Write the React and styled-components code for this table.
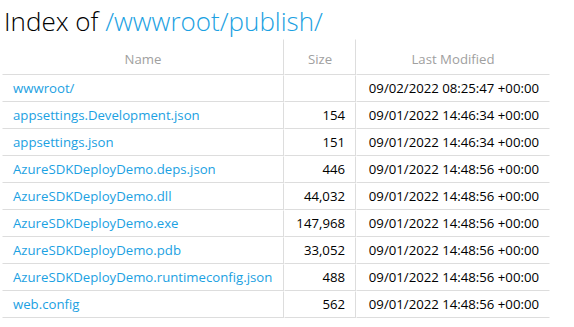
import React from 'react'
import styled, { createGlobalStyle } from 'styled-components'

const GlobalStyle = createGlobalStyle`
  body {
    margin: 0;
    background: #fff;
    color: #000;
    font-family: "Open Sans", "Noto Sans", sans-serif;
    font-size: 13.2px;
  }
`;

const Main = styled.section`
  padding: 0 2px;
`;

const Title = styled.h1`
  font-family: "Open Sans", "Noto Sans", sans-serif;
  font-size: 26px;
  font-weight: 300;
  line-height: 35px;
  margin: 4px 0 0 2px;
  color: #000;
`;

const Link = styled.a`
  color: #1ba1e2;
  text-decoration: none;
`;

const Table = styled.table`
  border-collapse: separate;
  border-spacing: 0;
  margin: 0 0 20px;
  width: 548px;
  table-layout: fixed;
`;

const Head = styled.th`
  vertical-align: bottom;
  padding: 10px 5px 5px 5px;
  font-weight: 400;
  line-height: 19px;
  color: #a0a0a0;
  text-align: center;
  box-sizing: border-box;
  width: ${p => p.$w}px;
  border: 1px solid transparent;
  border-right-color: ${p => (p.$last ? 'transparent' : '#ddd')};
  border-bottom-color: #ddd;
`;

const Cell = styled.td`
  padding: 3px 10px;
  line-height: 19px;
  white-space: nowrap;
  text-align: ${p => (p.$right ? 'right' : 'left')};
  box-sizing: border-box;
  border: 1px solid transparent;
  border-right-color: ${p => (p.$last ? 'transparent' : '#ddd')};
  border-bottom-color: #ddd;
`;

const files = [
  { name: 'wwwroot/', size: '', date: '09/02/2022 08:25:47 +00:00' },
  { name: 'appsettings.Development.json', size: '154', date: '09/01/2022 14:46:34 +00:00' },
  { name: 'appsettings.json', size: '151', date: '09/01/2022 14:46:34 +00:00' },
  { name: 'AzureSDKDeployDemo.deps.json', size: '446', date: '09/01/2022 14:48:56 +00:00' },
  { name: 'AzureSDKDeployDemo.dll', size: '44,032', date: '09/01/2022 14:48:56 +00:00' },
  { name: 'AzureSDKDeployDemo.exe', size: '147,968', date: '09/01/2022 14:48:56 +00:00' },
  { name: 'AzureSDKDeployDemo.pdb', size: '33,052', date: '09/01/2022 14:48:56 +00:00' },
  { name: 'AzureSDKDeployDemo.runtimeconfig.json', size: '488', date: '09/01/2022 14:48:56 +00:00' },
  { name: 'web.config', size: '562', date: '09/01/2022 14:48:56 +00:00' },
];

export default function App() {
  return (
    <>
      <GlobalStyle />
      <Main>
        <header>
          <Title>
            Index of <Link href="#">/wwwroot/publish/</Link>
          </Title>
        </header>
        <Table>
          <thead>
            <tr>
              <Head $w={282}>Name</Head>
              <Head $w={72}>Size</Head>
              <Head $w={194} $last>Last Modified</Head>
            </tr>
          </thead>
          <tbody>
            {files.map(f => (
              <tr key={f.name}>
                <Cell>
                  <Link href="#">{f.name}</Link>
                </Cell>
                <Cell $right>{f.size}</Cell>
                <Cell $right $last>{f.date}</Cell>
              </tr>
            ))}
          </tbody>
        </Table>
      </Main>
    </>
  );
}
